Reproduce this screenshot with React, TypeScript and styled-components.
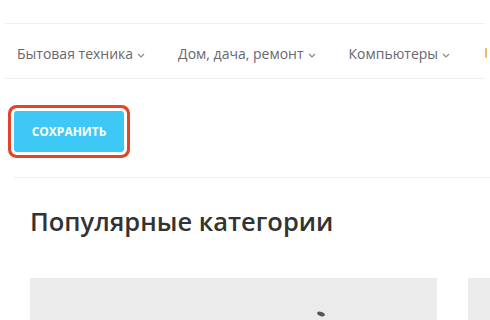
import React from 'react'
import styled, { createGlobalStyle } from 'styled-components'

const GlobalStyle = createGlobalStyle`
  html, body {
    margin: 0;
    padding: 0;
    background: #fff;
    overflow: hidden;
  }
  body {
    font-family: 'Open Sans', 'Noto Sans', sans-serif;
  }
`

const navItems = ['Бытовая техника', 'Дом, дача, ремонт', 'Компьютеры']

function Chevron() {
  return (
    <svg width="8" height="5" viewBox="0 0 8 5">
      <path d="M1 1l3 3 3-3" fill="none" stroke="#8a8a8a" strokeWidth="1.2" />
    </svg>
  )
}

function PromoIcon() {
  return (
    <svg width="6" height="10" viewBox="0 0 6 10">
      <path d="M3 1v8" stroke="#f7b955" strokeWidth="2" strokeLinecap="round" />
    </svg>
  )
}

export default function App() {
  return (
    <S.Page>
      <GlobalStyle />
      <S.Nav>
        {navItems.map(title => (
          <S.NavLink key={title}>
            <span>{title}</span>
            <Chevron />
          </S.NavLink>
        ))}
        <S.PromoLink>
          <PromoIcon />
        </S.PromoLink>
      </S.Nav>
      <S.Content>
        <S.ActionRow>
          <S.SaveButton>Сохранить</S.SaveButton>
        </S.ActionRow>
        <S.Popular>
          <h2>Популярные категории</h2>
          <S.CardRow>
            <S.Card>
              <S.CardMark />
            </S.Card>
            <S.Card />
          </S.CardRow>
        </S.Popular>
      </S.Content>
    </S.Page>
  )
}

export const S = {
  Page: styled.div`
    width: 490px;
    height: 320px;
    overflow: hidden;
    padding-top: 23px;
    box-sizing: border-box;
  `,
  Nav: styled.nav`
    display: flex;
    align-items: center;
    gap: 33px;
    height: 56px;
    margin: 0 5px;
    padding: 4px 0 0 12px;
    box-sizing: border-box;
    border-top: 1px solid #efefef;
    border-bottom: 1px solid #efefef;
    white-space: nowrap;
  `,
  NavLink: styled.a`
    display: flex;
    flex-shrink: 0;
    align-items: center;
    gap: 4px;
    font-size: 14px;
    color: #6a6670;
    cursor: pointer;

    svg {
      margin-top: 4px;
    }
  `,
  PromoLink: styled.a`
    display: flex;
    flex-shrink: 0;
    align-items: center;
    cursor: pointer;

    svg {
      flex-shrink: 0;
    }
  `,
  Content: styled.div`
    padding-left: 14px;
  `,
  ActionRow: styled.div`
    display: flex;
    padding: 32px 0 25px;
    border-bottom: 1px solid #f0f0f0;
  `,
  SaveButton: styled.button`
    width: 110px;
    height: 41px;
    border: none;
    border-radius: 3px;
    background: #3ec8f5;
    color: #fff;
    font-family: 'Open Sans', sans-serif;
    font-size: 12px;
    font-weight: 700;
    text-transform: uppercase;
    box-shadow: 0 0 0 3px #fff, 0 0 0 6px #e5432a;
    cursor: pointer;
  `,
  Popular: styled.section`
    padding: 28px 0 0 16px;

    h2 {
      margin: 0;
      font-size: 25.5px;
      line-height: 31px;
      font-weight: 600;
      color: #333;
    }
  `,
  CardRow: styled.div`
    display: flex;
    gap: 31px;
    margin-top: 41px;
  `,
  Card: styled.div`
    position: relative;
    flex: 0 0 407px;
    height: 120px;
    background: #ebebeb;
  `,
  CardMark: styled.div`
    position: absolute;
    left: 287px;
    top: 34px;
    width: 8px;
    height: 4px;
    border-radius: 50%;
    background: #555;
    transform: rotate(20deg);
  `,
}
